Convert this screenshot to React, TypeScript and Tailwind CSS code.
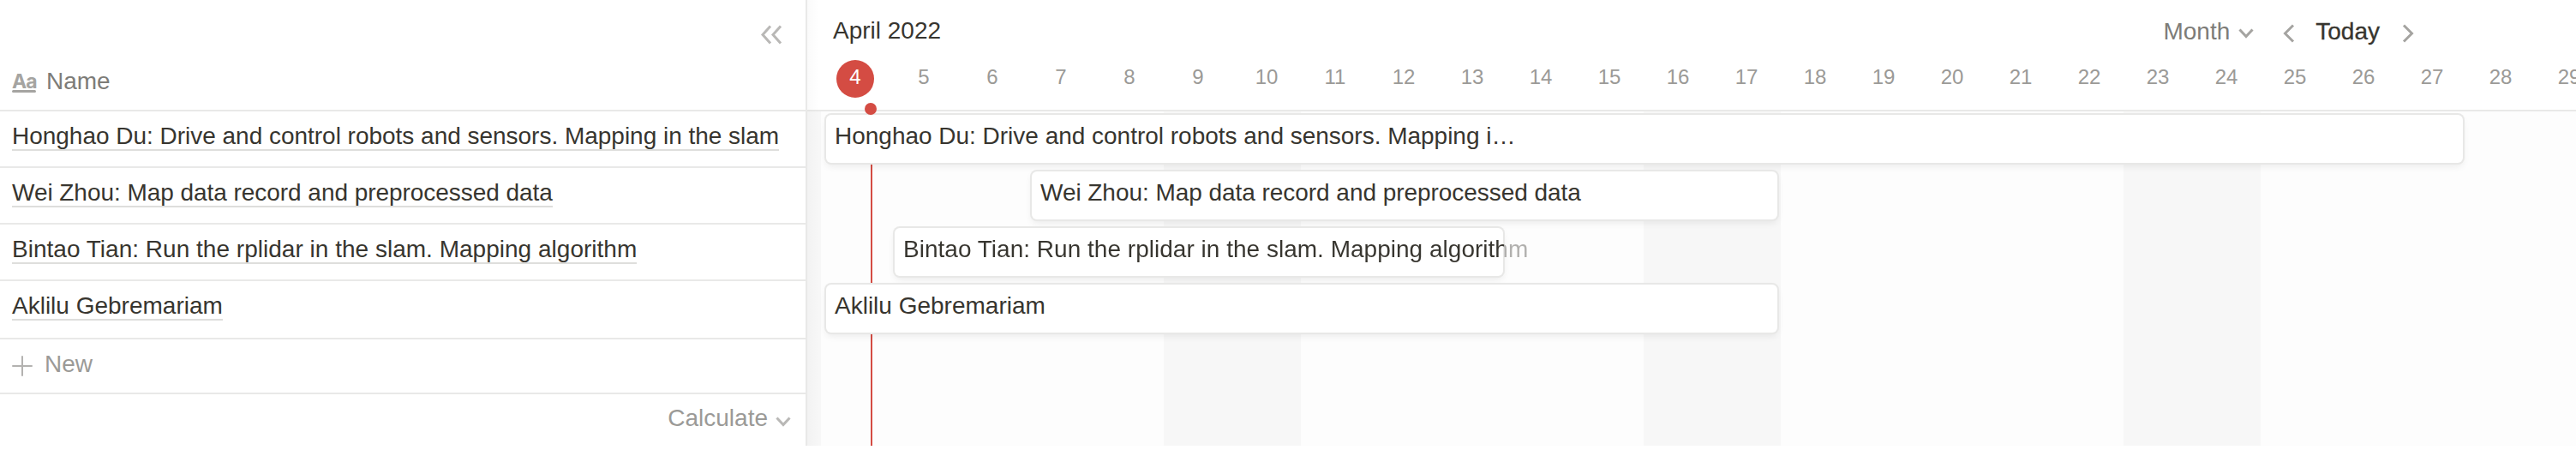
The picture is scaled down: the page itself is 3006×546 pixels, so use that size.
import React from "react";

const tasks = [
  {
    name: "Honghao Du: Drive and control robots and sensors. Mapping in the slam",
    label: "Honghao Du: Drive and control robots and sensors. Mapping i…",
    bar: "ml-[22px] w-[1910px] tracking-[-0.015px]",
    tracking: "tracking-[-0.02px]",
  },
  {
    name: "Wei Zhou: Map data record and preprocessed data",
    label: "Wei Zhou: Map data record and preprocessed data",
    bar: "ml-[262px] w-[870px] tracking-[-0.045px]",
    tracking: "tracking-[-0.045px]",
  },
  {
    name: "Bintao Tian: Run the rplidar in the slam. Mapping algorithm",
    label: "Bintao Tian: Run the rplidar in the slam. Mapping algorithm",
    bar: "ml-[102px] w-[710px] tracking-[0.015px]",
    tracking: "tracking-[0.015px]",
    overflows: true,
  },
  {
    name: "Aklilu Gebremariam",
    label: "Aklilu Gebremariam",
    bar: "ml-[22px] w-[1110px]",
    tracking: "",
  },
];

const days = Array.from({ length: 26 }, (_, i) => i + 4);
const weekend = [9, 10, 16, 17, 23, 24];

function Chevron({ d, className }: { d: string; className: string }) {
  return (
    <svg className={className} fill="none" stroke="currentColor" strokeWidth="3">
      <path d={d} />
    </svg>
  );
}

function NameTable() {
  return (
    <div className="flex h-[520px] w-[942px] shrink-0 flex-col border-r-2 border-[#e9e9e8]">
      <div className="flex h-[130px] flex-col border-b-2 border-[#e9e9e8]">
        <div className="flex h-[70px] justify-end pt-[29px] pr-[27px]">
          <Chevron
            className="h-[23px] w-[26px] text-[#b9b8b6]"
            d="M12 1.5L3 11.5L12 21.5M24 1.5L15 11.5L24 21.5"
          />
        </div>
        <div className="flex pl-[14px]">
          <div className="mt-[14px] flex h-[24px] w-[28px] flex-col justify-between">
            <span className="h-[20px] font-['Inter',sans-serif] text-[23px] leading-[23px] font-bold tracking-[-1px] text-[#a5a4a1]">
              Aa
            </span>
            <span className="h-[3px] w-full rounded-full bg-[#a5a4a1]" />
          </div>
          <span className="mt-[7px] ml-[12px] leading-[36px] text-[#7d7c78]">Name</span>
        </div>
      </div>
      {tasks.map((t, i) => (
        <div
          key={t.name}
          className={`flex shrink-0 items-start border-b-2 border-[#e9e9e8] pt-[10px] pl-[14px] ${i === 3 ? "h-[68px]" : "h-[66px]"}`}
        >
          <span
            className={`h-[36px] border-b-2 border-[#dededc] leading-[38px] whitespace-nowrap ${t.tracking}`}
          >
            {t.name}
          </span>
        </div>
      ))}
      <div className="flex h-[64px] shrink-0 border-b-2 border-[#e9e9e8] pl-[14px] text-[#9b9a97]">
        <svg className="mt-[19px] h-[24px] w-[24px] text-[#b3b2b0]" stroke="currentColor" strokeWidth="2" strokeLinecap="round">
          <path d="M12 1V23M1 12H23" />
        </svg>
        <span className="mt-[11px] ml-[14px] leading-[36px]">New</span>
      </div>
      <div className="flex h-[60px] justify-end pr-[17px] text-[#9b9a97]">
        <span className="mt-[10px] leading-[36px]">Calculate</span>
        <Chevron className="mt-[26px] ml-[9px] h-[12px] w-[18px] text-[#b9b8b6]" d="M1.5 1.5L9 9.5L16.5 1.5" />
      </div>
    </div>
  );
}

function TimelineHeader() {
  return (
    <div className="flex h-[130px] flex-col border-b-2 border-[#e9e9e8]">
      <div className="flex h-[70px] pl-[30px]">
        <span className="mt-[18px] leading-[36px]">April 2022</span>
        <div className="mr-[189px] ml-auto flex">
          <span className="mt-[19px] leading-[36px] text-[#7d7c78]">Month</span>
          <Chevron className="mt-[33px] ml-[10px] h-[12px] w-[18px] text-[#a5a4a1]" d="M1.5 1.5L9 9.5L16.5 1.5" />
          <Chevron className="mt-[28px] ml-[34px] h-[22px] w-[14px] text-[#a5a4a1]" d="M12 1.5L2.5 11L12 20.5" />
          <span className="mt-[19px] ml-[24px] leading-[36px] [-webkit-text-stroke:0.3px_#37352f]">Today</span>
          <Chevron className="mt-[28px] ml-[26px] h-[22px] w-[14px] text-[#a5a4a1]" d="M2 1.5L11.5 11L2 20.5" />
        </div>
      </div>
      <div className="flex pl-[16px] text-[24px]">
        {days.map((d) => (
          <div key={d} className="flex h-[44px] w-[80px] shrink-0 justify-center">
            <span
              className={
                d === 4
                  ? "h-[44px] w-[44px] rounded-full bg-[#d44c43] text-center leading-[40px] text-white"
                  : "leading-[40px] text-[#9b9a97]"
              }
            >
              {d}
            </span>
          </div>
        ))}
      </div>
    </div>
  );
}

function TimelineBody() {
  return (
    <div className="relative h-[390px] overflow-hidden">
      <div className="absolute inset-0 flex">
        <div className="w-[16px] shrink-0 bg-[#f7f7f7]" />
        {days.map((d) => (
          <div
            key={d}
            className={`w-[80px] shrink-0 ${weekend.includes(d) ? "bg-[#f7f7f7]" : "bg-[#fdfdfd]"}`}
          />
        ))}
      </div>
      <div className="absolute top-0 bottom-0 left-[74px] w-[2px] bg-[#d44c43]" />
      <div className="relative flex flex-col gap-[10px] pt-[4px]">
        {tasks.map((t) => (
          <div
            key={t.name}
            className={`${t.bar} h-[56px] rounded-[6px] bg-white pt-[6px] pl-[10px] leading-[38px] whitespace-nowrap shadow-[0_0_0_2px_#e8e8e7,0_4px_8px_rgba(15,15,15,0.08)]`}
          >
            <span
              className={
                t.overflows
                  ? "bg-[linear-gradient(90deg,#37352f_701px,#b1b0ae_701px)] bg-clip-text text-transparent"
                  : ""
              }
            >
              {t.label}
            </span>
          </div>
        ))}
      </div>
    </div>
  );
}

export default function App() {
  return (
    <div className="flex h-[546px] w-[3006px] overflow-hidden bg-white font-['Liberation_Sans',Arial,sans-serif] text-[28px] text-[#37352f]">
      <NameTable />
      <div className="relative h-[520px] w-[2064px] overflow-hidden">
        <TimelineHeader />
        <TimelineBody />
        <div className="absolute top-[120px] left-[67px] h-[14px] w-[14px] rounded-full bg-[#d44c43]" />
        <div className="absolute top-0 left-0 h-full w-[14px] bg-linear-to-r from-black/[0.02] to-transparent" />
      </div>
    </div>
  );
}
